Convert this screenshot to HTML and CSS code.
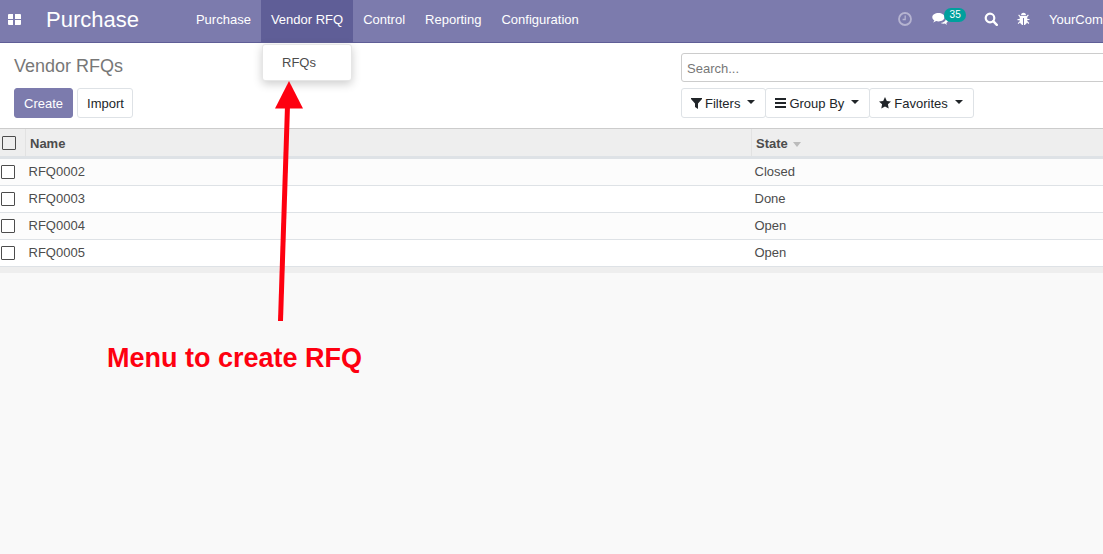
FILE: index.html
```html
<!DOCTYPE html>
<html lang="en">
<head>
    <meta charset="UTF-8">
    <meta name="viewport" content="width=device-width, initial-scale=1.0">
    <title>Vendor RFQs - Purchase</title>
    <link rel="stylesheet" href="styles.css">
</head>
<body>
    <div class="page">
        <header class="navbar">
            <a class="apps-icon" href="#">
                <svg width="13" height="11" viewBox="0 0 13 11"><path fill="#fff" d="M0 1a1 1 0 0 1 1-1h4v5H0zM7 0h5a1 1 0 0 1 1 1v4H7zM0 6h5v5H1a1 1 0 0 1-1-1zM7 6h6v4a1 1 0 0 1-1 1H7z"/></svg>
            </a>
            <a class="brand" href="#">Purchase</a>
            <nav class="nav-menu">
                <a href="#">Purchase</a>
                <a class="active" href="#">Vendor RFQ</a>
                <a href="#">Control</a>
                <a href="#">Reporting</a>
                <a href="#">Configuration</a>
            </nav>
            <div class="nav-right">
                <svg class="icon-clock" width="14" height="14" viewBox="0 0 14 14"><circle cx="7" cy="7" r="6" fill="none" stroke="#b5b3d0" stroke-width="1.8"/><path d="M7.2 3.5v4H4.6" fill="none" stroke="#b5b3d0" stroke-width="1.3"/></svg>
                <span class="messages">
                    <svg width="16" height="14" viewBox="0 0 16 14"><path fill="#fff" d="M6.5 1C3 1 .3 2.900.3 5.200c0 1.300.8 2.400 2 3.200-.2.800-.7 1.500-1.300 2 1.200-.1 2.300-.6 3.100-1.300.7.200 1.500.3 2.400.3 3.500 0 6-1.900 6-4.200S10 1 6.500 1z"/><path fill="#fff" d="M14 6.500c0 2.400-2.300 4.100-5.300 4.500.8.500 1.700.7 2.800.7l1.400-.1c.6.600 1.400 1 2.100 1.100-.4-.5-.6-1-.7-1.600 1-.6 1.600-1.500 1.600-2.500 0-1-.7-1.800-1.900-2.300z"/></svg>
                    <span class="badge">35</span>
                </span>
                <svg class="icon-search" width="14" height="14" viewBox="0 0 14 14"><circle cx="6" cy="6" r="4.300" fill="none" stroke="#fff" stroke-width="2.200"/><path d="M9.200 9.200l3.600 3.600" stroke="#fff" stroke-width="2.400" stroke-linecap="round"/></svg>
                <svg class="icon-bug" width="13" height="14" viewBox="0 0 13 14"><path fill="#fff" d="M4 3.200a2.500 2.500 0 0 1 5 0zM3.500 4h6l1.500-1.500.8.800L10.300 5v2h2.200v1.100h-2.200v1l2 2-.8.800-1.500-1.500C9.500 11.800 8 13 7 13V6H6v7c-1 0-2.500-1.200-3-2.600L1.500 12l-.8-.8 2-2v-1H.5V7h2.200V5L1.200 3.300l.8-.8z"/></svg>
                <span class="user-name">YourCompany</span>
            </div>
        </header>

        <section class="control-panel">
            <div class="cp-left">
                <h1 class="breadcrumb">Vendor RFQs</h1>
                <div class="cp-buttons">
                    <button class="btn btn-primary">Create</button>
                    <button class="btn btn-import">Import</button>
                </div>
            </div>
            <div class="cp-right">
                <input class="search-input" type="text" placeholder="Search...">
                <div class="search-options">
                    <button class="btn btn-filter">
                        <svg width="11" height="11" viewBox="0 0 11 11"><path fill="#212529" d="M0 0h11v1L7 5.500V11L4 9V5.500L0 1z"/></svg>
                        Filters <span class="caret"></span>
                    </button>
                    <button class="btn btn-filter">
                        <svg width="11" height="10" viewBox="0 0 11 10"><path fill="#212529" d="M0 0h11v2H0zM0 4h11v2H0zM0 8h11v2H0z"/></svg>
                        Group By <span class="caret"></span>
                    </button>
                    <button class="btn btn-filter">
                        <svg width="12" height="12" viewBox="0 0 12 12"><path fill="#212529" d="M6 0l1.800 3.900 4.200.5-3.100 2.900.8 4.200L6 9.400 2.300 11.500l.8-4.200L0 4.400l4.200-.5z"/></svg>
                        Favorites <span class="caret"></span>
                    </button>
                </div>
            </div>
        </section>

        <table class="list-table">
            <thead>
                <tr>
                    <th class="col-check"><span class="checkbox head-check"></span></th>
                    <th class="col-name">Name</th>
                    <th>State <span class="sort-caret"></span></th>
                </tr>
            </thead>
            <tbody>
                <tr><td class="col-check"><span class="checkbox"></span></td><td>RFQ0002</td><td>Closed</td></tr>
                <tr><td class="col-check"><span class="checkbox"></span></td><td>RFQ0003</td><td>Done</td></tr>
                <tr><td class="col-check"><span class="checkbox"></span></td><td>RFQ0004</td><td>Open</td></tr>
                <tr><td class="col-check"><span class="checkbox"></span></td><td>RFQ0005</td><td>Open</td></tr>
            </tbody>
        </table>
        <div class="table-foot"></div>

        <!-- dropdown open under Vendor RFQ -->
        <div class="dropdown-menu"><a href="#">RFQs</a></div>

        <!-- annotation drawn on the screenshot -->
        <svg class="arrow" width="40" height="245" viewBox="0 0 40 245">
            <path d="M15.500 25L8.500 240" fill="none" stroke="#fe0010" stroke-width="5"/>
            <path d="M17 0L31 27.500H3z" fill="#fe0010"/>
        </svg>
        <div class="annotation">Menu to create RFQ</div>
    </div>
</body>
</html>
```

FILE: styles.css
```css
/* General Styles */
html, body {
    margin: 0;
    padding: 0;
    height: 100%;
    overflow: hidden;
}

body {
    font-family: 'Liberation Sans', Arial, sans-serif;
    font-size: 13px;
    color: #4c4c4c;
    background-color: #f9f9f9;
}

a {
    color: inherit;
    text-decoration: none;
}

.page {
    position: relative;
    width: 1200px;
    height: 554px;
    overflow: hidden;
}

/* Navbar */
.navbar {
    display: flex;
    align-items: center;
    height: 42px;
    background-color: #7c7bad;
    border-bottom: 1px solid #5f5e97;
    color: #fff;
}

.apps-icon {
    display: flex;
    margin-left: 8px;
    margin-bottom: 4px;
}

.brand {
    margin-left: 25px;
    margin-right: 47px;
    margin-bottom: 2px;
    font-size: 22px;
}

.nav-menu {
    display: flex;
    height: 100%;
}

.nav-menu a {
    display: flex;
    align-items: center;
    padding: 0 10px 4px;
}

.nav-menu a.active {
    background-color: #5f5e97;
}

.nav-right {
    display: flex;
    align-items: center;
    margin-left: auto;
    margin-bottom: 4px;
    padding-right: 69px;
}

.messages {
    display: flex;
    margin-left: 20px;
    position: relative;
    width: 52px;
}

.badge {
    position: absolute;
    left: 12px;
    top: -4px;
    padding: 0 5.500px;
    height: 14px;
    line-height: 13px;
    border-radius: 7px;
    font-size: 10px;
    background-color: #00a09d;
    color: #fff;
}

.icon-bug {
    margin-left: 19px;
}

.user-name {
    margin-left: 19px;
}

/* Control panel */
.control-panel {
    display: flex;
    height: 85px;
    background-color: #fff;
    border-bottom: 1px solid #ccc;
}

.cp-left {
    width: 667px;
    padding: 13px 0 0 14px;
}

.breadcrumb {
    margin: 0;
    font-size: 18px;
    font-weight: normal;
    line-height: 21px;
    color: #777;
}

.cp-buttons {
    display: flex;
    gap: 4px;
    margin-top: 11px;
}

.btn {
    height: 30px;
    padding: 0 9px;
    font-family: inherit;
    font-size: 13px;
    color: #212529;
    background-color: #fff;
    border: 1px solid #dee2e6;
    border-radius: 3px;
}

.btn-primary {
    color: #fff;
    background-color: #7c7bad;
    border-color: #7c7bad;
}

.btn-import {
    padding-right: 8px;
}

.cp-right {
    flex: 1;
    padding-top: 10px;
}

.search-input {
    display: block;
    box-sizing: border-box;
    width: 100%;
    height: 29px;
    padding: 1px 5px 0;
    font-family: inherit;
    font-size: 13px;
    border: 1px solid #ccc;
    border-radius: 3px;
}

.search-input::placeholder {
    color: #777;
}

.search-options {
    display: flex;
    margin-top: 6px;
}

.btn-filter {
    display: flex;
    align-items: center;
    gap: 3px;
    padding-right: 10px;
}

.btn-filter + .btn-filter {
    margin-left: -1px;
}

.caret {
    width: 0;
    height: 0;
    margin-left: 4px;
    margin-bottom: 3px;
    border-top: 4px solid #212529;
    border-left: 4px solid transparent;
    border-right: 4px solid transparent;
}

/* List view */
.list-table {
    width: 100%;
    table-layout: fixed;
    border-collapse: collapse;
    background-color: #fff;
}

.list-table th {
    height: 26px;
    padding: 1px 4px 0;
    text-align: left;
    font-weight: bold;
    background-color: #eeeeee;
    border-bottom: 3px solid #dee2e6;
}

.list-table td {
    height: 24px;
    padding: 0 3px 2px;
    border-bottom: 1px solid #dee2e6;
}

.list-table tbody tr:nth-child(odd) {
    background-color: #fcfcfc;
}

.list-table .col-check {
    width: 25px;
    padding: 0;
}

.col-name {
    width: 717px;
}

.list-table th + th {
    border-left: 1px solid #e2e2e2;
}

.checkbox {
    display: block;
    box-sizing: border-box;
    width: 14px;
    height: 14px;
    margin-left: 1px;
    border: 1px solid #4c4c4c;
    background-color: #fff;
    border-radius: 1px;
}

.head-check {
    margin-left: 2px;
    background-color: transparent;
}

.sort-caret {
    display: inline-block;
    margin-left: 2px;
    vertical-align: 1px;
    border-top: 5px solid #bbb;
    border-left: 4px solid transparent;
    border-right: 4px solid transparent;
}

.table-foot {
    height: 6px;
    background-color: #eeeeee;
}

/* Overlays */
.dropdown-menu {
    position: absolute;
    left: 262px;
    top: 44px;
    width: 90px;
    height: 37px;
    line-height: 35px;
    box-sizing: border-box;
    padding-left: 19px;
    background-color: #fff;
    border: 1px solid #e6e6e6;
    border-radius: 3px;
    box-shadow: 0 3px 10px rgba(0, 0, 0, 0.2);
    color: #4c4c4c;
}

.arrow {
    position: absolute;
    left: 272px;
    top: 81px;
}

.annotation {
    position: absolute;
    left: 107px;
    top: 342px;
    font-size: 27px;
    line-height: 32px;
    font-weight: bold;
    color: #fe0010;
}
```
